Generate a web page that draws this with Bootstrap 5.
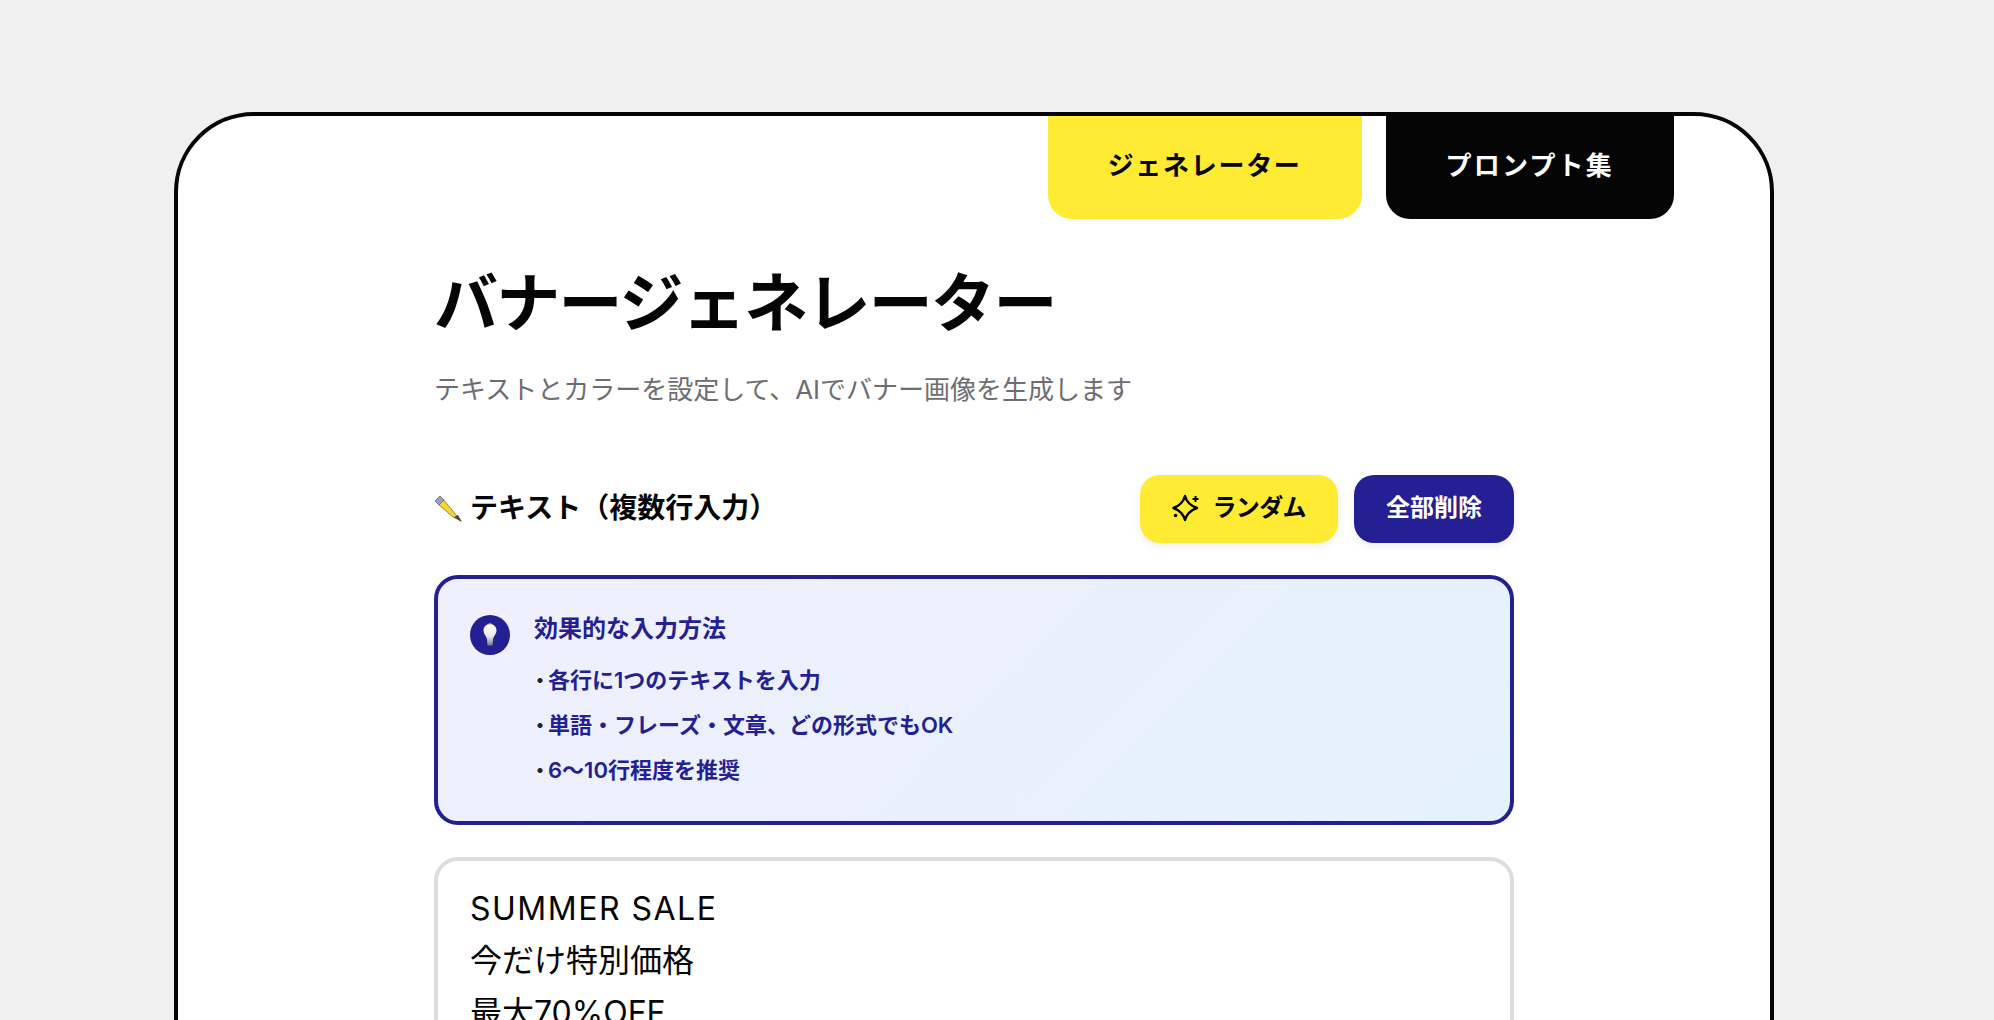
<!DOCTYPE html>
<html lang="ja">
<head>
<meta charset="utf-8">
<title>バナージェネレーター</title>
<link href="https://cdn.jsdelivr.net/npm/bootstrap@5.3.0/dist/css/bootstrap.min.css" rel="stylesheet">
<style>
html,body{height:100%;overflow:hidden}
body{background:#f0f0f0;font-family:"Inter","Noto Sans CJK JP",sans-serif;color:#050505;padding:112px 0 0 174px}
.app-shell{width:1600px;min-height:1400px;background:#fff;border:4px solid #050505;border-radius:80px;padding:0 96px}
.tab-item{height:103px;padding:0 60px 4px;font-size:26px;font-weight:700;border-radius:0 0 24px 24px;color:#050505;text-decoration:none}
.tab-yellow{background:#ffeb33;letter-spacing:1.7px}
.tab-dark{background:#050505;color:#fff;letter-spacing:2.2px}
.tab-gap{gap:24px}
.inner{width:1080px;margin-left:160px}
.page-title{font-size:64px;font-weight:700;line-height:1.2;letter-spacing:-1.7px;margin:46px 0 0}
.page-sub{font-size:26px;line-height:39px;color:#6d6d72;margin:28px 0 0}
.sec-head{margin-top:66px;height:68px}
.sec-title{font-size:28px;font-weight:700;margin:0;gap:8px}
.act-btn{height:68px;padding:0 32px 2px;font-size:24px;font-weight:700;border-radius:20px;border:0;box-shadow:0 3px 8px rgba(0,0,0,.07)}
.act-yellow{background:#ffeb33;color:#050505;gap:8px;letter-spacing:-.6px}
.act-blue{background:#241f92;color:#fff}
.tip-box{margin-top:32px;height:250px;border:4px solid #241f92;border-radius:24px;background:linear-gradient(135deg,#f1effe,#e3f2fd);padding:36px 32px;color:#241f92;gap:24px}
.tip-icon{width:40px;height:40px;background:#241f92;border-radius:50%;flex:none}
.tip-title{font-size:24px;font-weight:700;line-height:28px;margin:0 0 15px}
.tip-list{margin:0;padding:0;list-style:none;font-size:22px;font-weight:600;line-height:45px}
.tip-list li{height:45px}
.tip-list li::before{content:"・";color:#222;display:inline-block;width:18px;margin-left:-4px;font-size:20px}
.text-input{margin-top:32px;height:600px;border:4px solid #dddde0;border-radius:24px;padding:22px 32px;font-size:32px;line-height:52px;color:#050505;box-shadow:none}
.latin-line{letter-spacing:1.5px}
</style>
</head>
<body>
<main class="app-shell">
  <nav class="d-flex justify-content-end tab-gap">
    <a class="tab-item tab-yellow d-flex align-items-center" href="#">ジェネレーター</a>
    <a class="tab-item tab-dark d-flex align-items-center" href="#">プロンプト集</a>
  </nav>
  <div class="inner">
    <h1 class="page-title">バナージェネレーター</h1>
    <p class="page-sub">テキストとカラーを設定して、AIでバナー画像を生成します</p>
    <div class="sec-head d-flex justify-content-between align-items-center">
      <h2 class="sec-title d-flex align-items-center">
        <svg width="28" height="28" viewBox="0 0 28 28"><path d="M4 9 9 4 27 26 19 22Z" fill="#f5d53a" stroke="#9a8a30" stroke-width="1"/><path d="M1 6 6 1 10 5 5 10Z" fill="#9c9ccb" stroke="#77778f" stroke-width="1"/><path d="M20 22 24 20 28 27Z" fill="#444"/></svg>
        テキスト（複数行入力）
      </h2>
      <div class="d-flex gap-3">
        <button type="button" class="btn act-btn act-yellow d-flex align-items-center">
          <svg width="32" height="32" viewBox="0 0 32 32" fill="none"><path d="M13 4C15 11 19 14 25 16 19 18 15 21 13 28 11 21 7 18 1.500 16 7 14 11 11 13 4Z" stroke="#050505" stroke-width="2.400" stroke-linejoin="round"/><path d="M23.500 4v6M20.500 7h6" stroke="#050505" stroke-width="2"/><circle cx="3.600" cy="23.500" r="1.800" fill="#050505"/></svg>
          ランダム
        </button>
        <button type="button" class="btn act-btn act-blue">全部削除</button>
      </div>
    </div>
    <section class="tip-box d-flex">
      <div class="tip-icon d-flex align-items-center justify-content-center">
        <svg width="14" height="24" viewBox="0 0 14 24"><defs><linearGradient id="bulbFill" x1="0" y1="0" x2="0" y2="1"><stop offset="0" stop-color="#fff"/><stop offset=".6" stop-color="#e8e8e8"/><stop offset="1" stop-color="#77778c"/></linearGradient></defs><path d="M7 1C3 1 .5 4 .5 7.500c0 3.500 3 5.500 3.500 9l.5 6h5l.5-6c.5-3.500 3.500-5.500 3.500-9C13.500 4 11 1 7 1Z" fill="url(#bulbFill)"/><path d="M5 1.500 7 .8l2 .7" stroke="#f7d94a" stroke-width="1.200" fill="none"/></svg>
      </div>
      <div>
        <h3 class="tip-title">効果的な入力方法</h3>
        <ul class="tip-list">
          <li>各行に1つのテキストを入力</li>
          <li>単語・フレーズ・文章、どの形式でもOK</li>
          <li>6〜10行程度を推奨</li>
        </ul>
      </div>
    </section>
    <div class="form-control text-input" role="textbox" aria-multiline="true" aria-label="テキスト">
      <div class="latin-line">SUMMER SALE</div>
      <div>今だけ特別価格</div>
      <div>最大70%OFF</div>
    </div>
  </div>
</main>
</body>
</html>
